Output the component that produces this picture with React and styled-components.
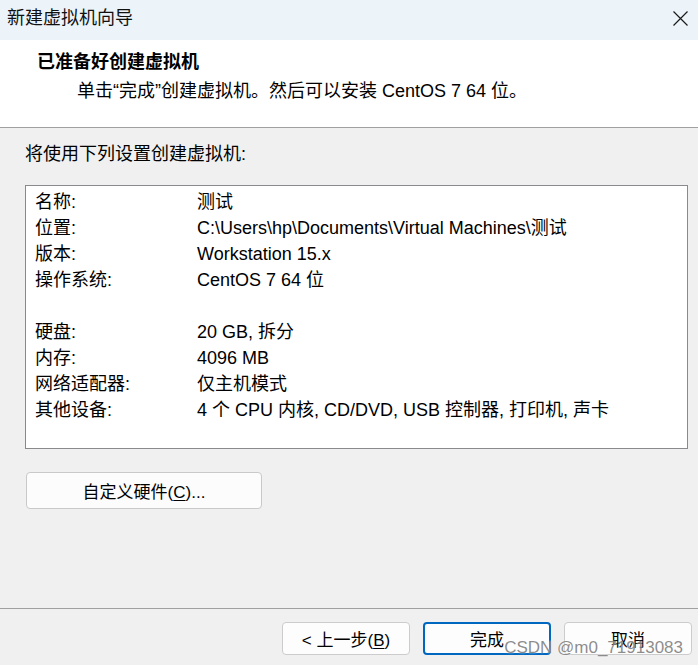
import React from "react";
import styled, { createGlobalStyle } from "styled-components";

const GlobalStyle = createGlobalStyle`
  html, body {
    margin: 0;
    padding: 0;
    background: #f0f0f0;
  }
  body {
    font-family: "Liberation Sans", "Noto Sans CJK SC", sans-serif;
    color: #000;
  }
`;

const Window = styled.div`
  position: relative;
  width: 698px;
  height: 665px;
  display: flex;
  flex-direction: column;
  background: #f0f0f0;
  overflow: hidden;
`;

const TitleBar = styled.div`
  height: 40px;
  flex: none;
  display: flex;
  align-items: center;
  justify-content: space-between;
  padding: 0 10px 0 7px;
  background: #ecf3f9;
`;

const Title = styled.span`
  font-size: 18px;
  line-height: 22px;
  color: #111;
  margin-top: -4px;
`;

const CloseIcon = styled.svg`
  width: 15px;
  height: 15px;
  margin-top: -4px;
`;

const Header = styled.div`
  flex: none;
  height: 88px;
  box-sizing: border-box;
  background: #fff;
  border-bottom: 1px solid #a0a0a0;
  padding: 10px 0 0 37px;
  display: flex;
  flex-direction: column;
  gap: 5px;
`;

const Heading = styled.div`
  font-size: 18px;
  line-height: 24px;
  font-weight: 700;
`;

const Subtitle = styled.div`
  font-size: 18px;
  line-height: 24px;
  padding-left: 40px;
`;

const Body = styled.div`
  flex: 1;
  display: flex;
  flex-direction: column;
  align-items: flex-start;
  padding: 14px 10px 0 25px;
`;

const Intro = styled.div`
  font-size: 18px;
  line-height: 24px;
`;

const SummaryBox = styled.div`
  margin-top: 19px;
  box-sizing: border-box;
  width: 663px;
  height: 264px;
  background: #fff;
  border: 1px solid #8a8a8d;
  padding: 3px 0 0 9px;
`;

const Row = styled.div`
  display: grid;
  grid-template-columns: 162px 1fr;
  height: 26px;
  font-size: 18px;
  line-height: 26px;
  white-space: nowrap;
`;

const Label = styled.span``;
const Value = styled.span``;

const CustomButton = styled.button`
  margin: 23px 0 0 1px;
  width: 236px;
  height: 37px;
  box-sizing: border-box;
  background: #fcfcfc;
  border: 1px solid #c9c9c9;
  border-radius: 4px;
  font-family: inherit;
  font-size: 17px;
  color: #000;
  padding: 0;
`;

const Underline = styled.span`
  text-decoration: underline;
  text-underline-offset: 2px;
`;

const Footer = styled.div`
  flex: none;
  height: 57px;
  box-sizing: border-box;
  border-top: 1px solid #a0a0a0;
  display: flex;
  justify-content: flex-end;
  align-items: flex-start;
  gap: 13px;
  padding: 13px 6px 0 0;
`;

const FooterButton = styled.button`
  width: 128px;
  height: 33px;
  box-sizing: border-box;
  background: #fdfdfd;
  border: ${(p) => (p.$primary ? "2px solid #0067c0" : "1px solid #cccccc")};
  border-radius: 4px;
  font-family: inherit;
  font-size: 17px;
  color: #000;
  padding: 0;
`;

const Watermark = styled.div`
  position: absolute;
  right: 15px;
  bottom: 7px;
  font-family: "Liberation Sans", sans-serif;
  font-size: 17px;
  line-height: 20px;
  color: rgba(120, 120, 120, 0.85);
  text-shadow: 0 0 2px rgba(255, 255, 255, 0.8);
  pointer-events: none;
`;

const rows = [
  ["名称:", "测试"],
  ["位置:", "C:\\Users\\hp\\Documents\\Virtual Machines\\测试"],
  ["版本:", "Workstation 15.x"],
  ["操作系统:", "CentOS 7 64 位"],
  null,
  ["硬盘:", "20 GB, 拆分"],
  ["内存:", "4096 MB"],
  ["网络适配器:", "仅主机模式"],
  ["其他设备:", "4 个 CPU 内核, CD/DVD, USB 控制器, 打印机, 声卡"],
];

export default function App() {
  return (
    <>
      <GlobalStyle />
      <Window>
        <TitleBar>
          <Title>新建虚拟机向导</Title>
          <CloseIcon viewBox="0 0 15 15">
            <path d="M0.5 0.5 L14.5 14.5 M14.5 0.5 L0.5 14.5" stroke="#1a1a1a" strokeWidth="1.2" fill="none" />
          </CloseIcon>
        </TitleBar>
        <Header>
          <Heading>已准备好创建虚拟机</Heading>
          <Subtitle>单击“完成”创建虚拟机。然后可以安装 CentOS 7 64 位。</Subtitle>
        </Header>
        <Body>
          <Intro>将使用下列设置创建虚拟机:</Intro>
          <SummaryBox>
            {rows.map((r, i) =>
              r ? (
                <Row key={i}>
                  <Label>{r[0]}</Label>
                  <Value>{r[1]}</Value>
                </Row>
              ) : (
                <Row key={i} />
              )
            )}
          </SummaryBox>
          <CustomButton>
            自定义硬件(<Underline>C</Underline>)...
          </CustomButton>
        </Body>
        <Footer>
          <FooterButton>
            &lt; 上一步(<Underline>B</Underline>)
          </FooterButton>
          <FooterButton $primary>完成</FooterButton>
          <FooterButton>取消</FooterButton>
        </Footer>
        <Watermark>CSDN @m0_71913083</Watermark>
      </Window>
    </>
  );
}
